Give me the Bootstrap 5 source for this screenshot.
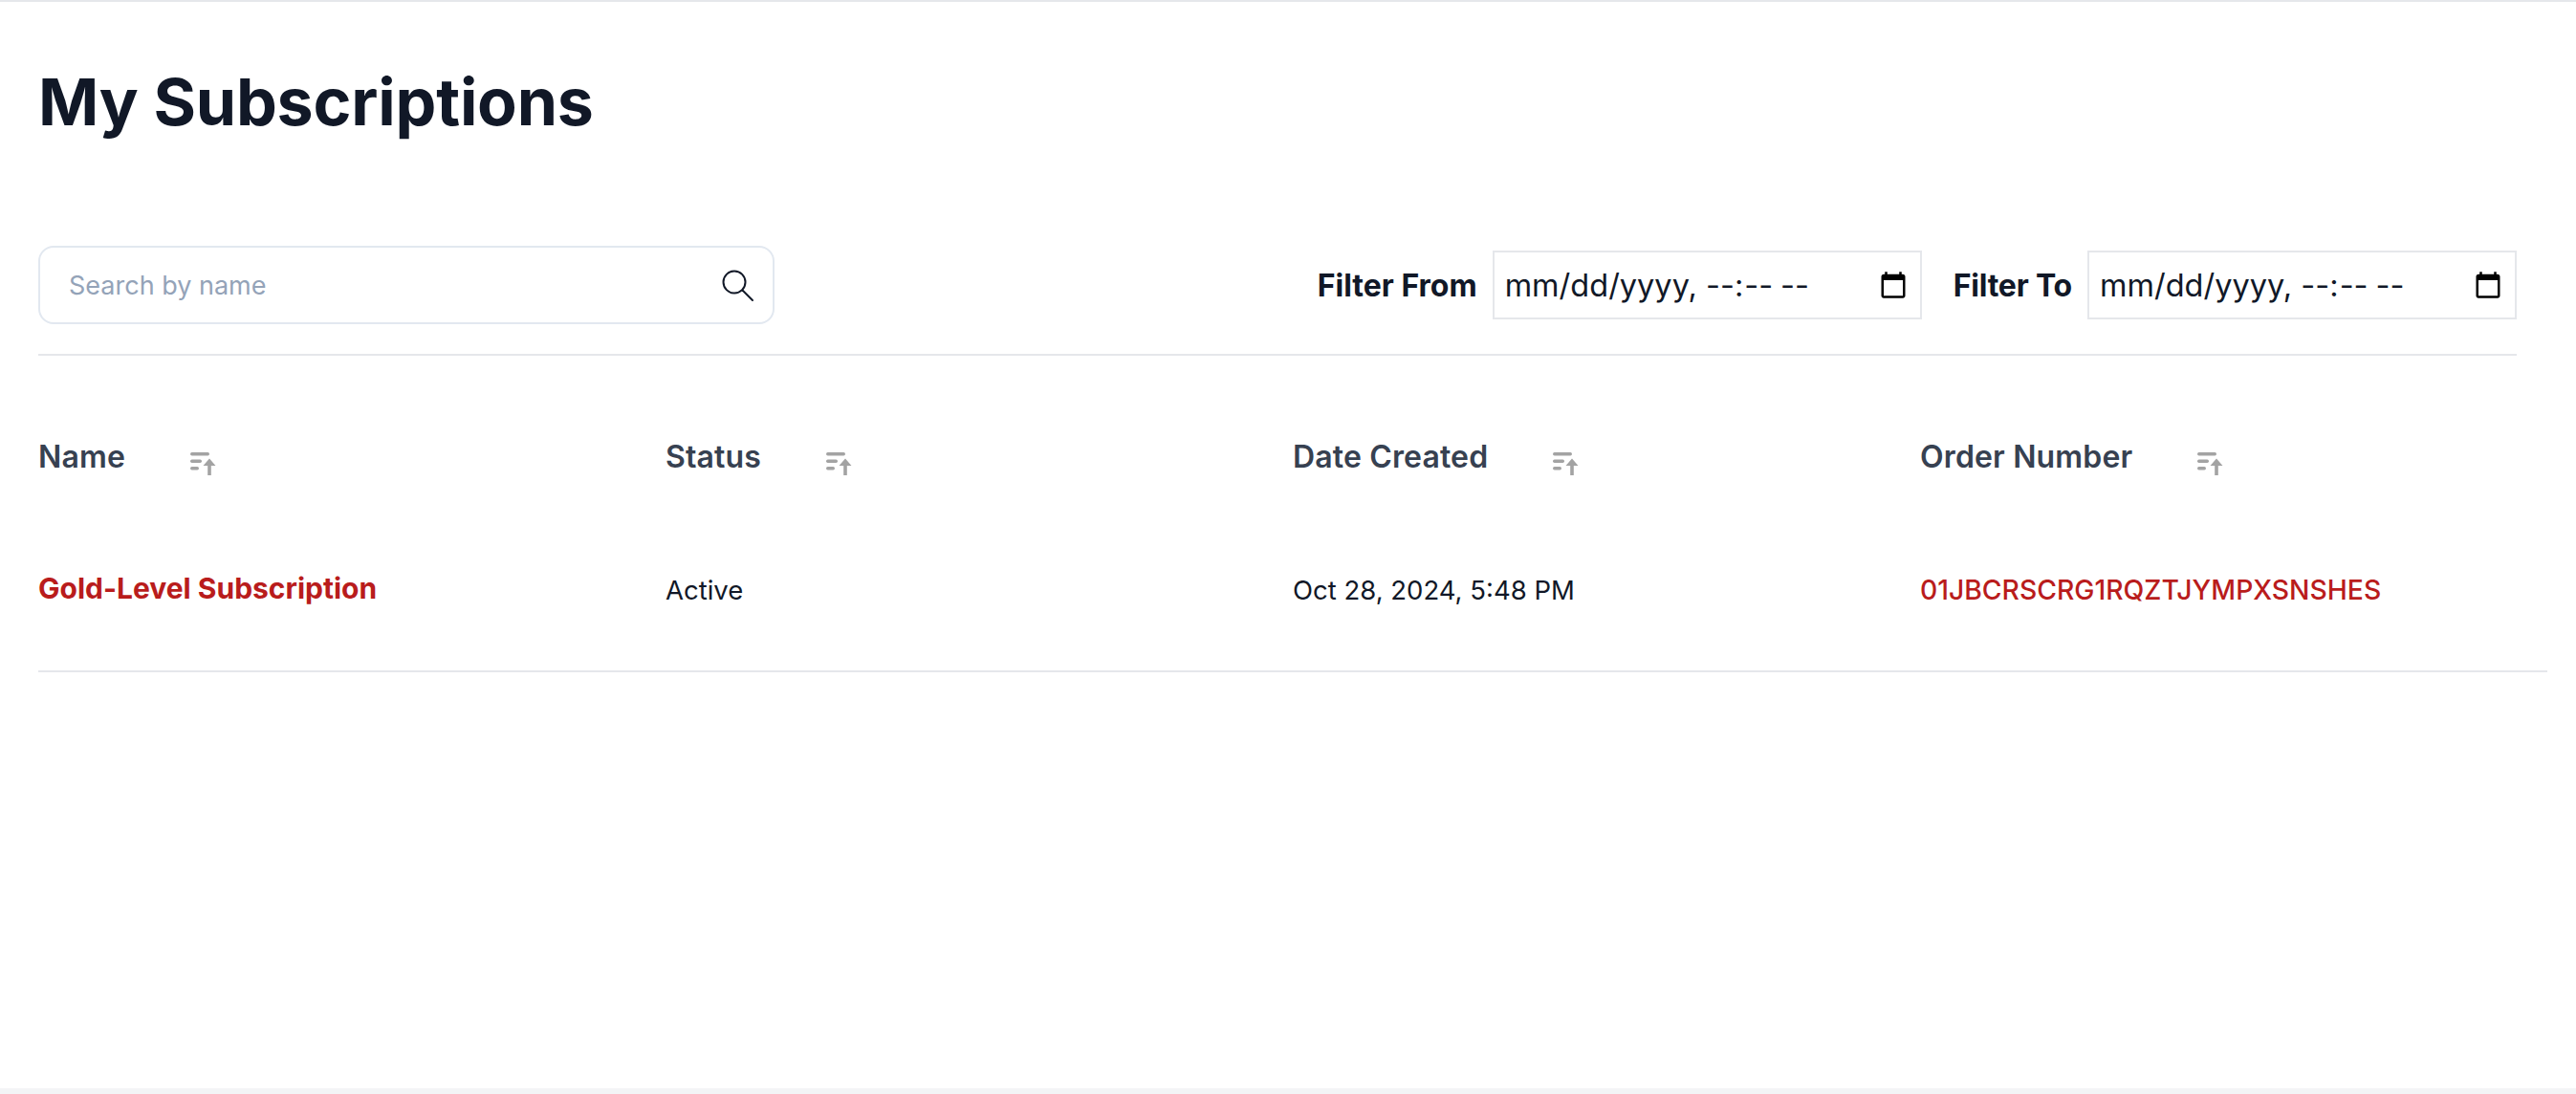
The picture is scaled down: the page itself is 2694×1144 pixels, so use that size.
<!DOCTYPE html>
<html lang="en">
<head>
<meta charset="utf-8">
<title>My Subscriptions</title>
<link href="https://cdn.jsdelivr.net/npm/bootstrap@5.3.0/dist/css/bootstrap.min.css" rel="stylesheet">
<style>
body{font-family:Inter,"Liberation Sans",sans-serif;background:#fff;color:#111827;display:flex;flex-direction:column;height:1144px;overflow:hidden}
.top-rule{height:2px;background:#e5e7eb;flex:none}
.bottom-rule{height:6px;background:#f3f4f6;flex:none;margin-top:auto}
.page-area{padding:0 30px 0 40px}
.page-title{font-size:68px;font-weight:700;line-height:80px;letter-spacing:-.2px;color:#111827;margin:64px 0 111px}
.tool-bar{width:2592px;height:82px;padding-bottom:31px;border-bottom:2px solid #e5e7eb;box-sizing:content-box}
.search-wrap{width:770px;height:82px;border:2px solid #e2e8f0;border-radius:16px;padding:0 19px 0 30px}
.search-wrap input{border:0;outline:0;flex:1;font-size:27px;background:transparent;color:#111827;padding:2px 0 0;min-width:0}
.search-wrap input::placeholder{color:#94a3b8}
.filter-label{font-size:32px;font-weight:700;color:#111827;padding-top:2px}
.label-to{margin-left:33px;letter-spacing:-.2px}
.date-field{width:449px;height:72px;border:2px solid #e5e7eb;border-radius:0;font-size:32.5px;font-family:Inter,sans-serif;color:#111827;padding:2px 12px 0 11px;background:#fff;outline:0}
.date-field::-webkit-calendar-picker-indicator{width:32px;height:32px;padding:0;margin:0}
.sub-table{width:2624px;table-layout:fixed;margin:0}
.sub-table th,.sub-table td{border:0;background:transparent}
.sub-table th{height:160px;padding:86px 0 34px;line-height:40px;font-size:32px;font-weight:600;letter-spacing:.15px;color:#374151;vertical-align:top}
.sub-table td{height:170px;padding:2px 0 0;font-size:27.5px;font-weight:400;color:#111827;border-bottom:2px solid #e5e7eb;vertical-align:middle}
.sub-name{display:inline-block;margin-bottom:4px;font-size:30px;font-weight:700;color:#b91c1c;text-decoration:none}
.sub-order{color:#b91c1c;text-decoration:none;font-weight:500;font-size:28.3px}
.sort-mark{width:28px;height:24px;margin-left:68px;vertical-align:-8px}
</style>
</head>
<body>
<div class="top-rule"></div>
<main class="page-area">
  <h1 class="page-title">My Subscriptions</h1>
  <div class="tool-bar d-flex align-items-center justify-content-between">
    <div class="search-wrap d-flex align-items-center">
      <input type="text" placeholder="Search by name" aria-label="Search by name">
      <svg width="36" height="36" viewBox="0 0 36 36" fill="none" stroke="#111827" stroke-width="2"><circle cx="15" cy="15" r="11.5"/><path d="M23.5 23.5 34 34" stroke-linecap="round"/></svg>
    </div>
    <div class="d-flex align-items-center">
      <label class="filter-label me-3">Filter From</label>
      <input class="date-field" type="datetime-local" aria-label="Filter From">
      <label class="filter-label label-to me-3">Filter To</label>
      <input class="date-field" type="datetime-local" aria-label="Filter To">
    </div>
  </div>
  <table class="table sub-table">
    <thead>
      <tr>
        <th>Name<svg class="sort-mark" viewBox="0 0 28 24" fill="#a3a3a3"><rect x="0" y="0" width="20" height="3.4" rx="1.7"/><rect x="0" y="7.5" width="12" height="3.4" rx="1.7"/><rect x="0" y="15" width="9" height="3.4" rx="1.7"/><path d="M20 6.5l6.5 7.5h-4.7v10h-3.6V14h-4.7z"/></svg></th>
        <th>Status<svg class="sort-mark" viewBox="0 0 28 24" fill="#a3a3a3"><rect x="0" y="0" width="20" height="3.4" rx="1.7"/><rect x="0" y="7.5" width="12" height="3.4" rx="1.7"/><rect x="0" y="15" width="9" height="3.4" rx="1.7"/><path d="M20 6.5l6.5 7.5h-4.7v10h-3.6V14h-4.7z"/></svg></th>
        <th>Date Created<svg class="sort-mark" viewBox="0 0 28 24" fill="#a3a3a3"><rect x="0" y="0" width="20" height="3.4" rx="1.7"/><rect x="0" y="7.5" width="12" height="3.4" rx="1.7"/><rect x="0" y="15" width="9" height="3.4" rx="1.7"/><path d="M20 6.5l6.5 7.5h-4.7v10h-3.6V14h-4.7z"/></svg></th>
        <th>Order Number<svg class="sort-mark" viewBox="0 0 28 24" fill="#a3a3a3"><rect x="0" y="0" width="20" height="3.4" rx="1.7"/><rect x="0" y="7.5" width="12" height="3.4" rx="1.7"/><rect x="0" y="15" width="9" height="3.4" rx="1.7"/><path d="M20 6.5l6.5 7.5h-4.7v10h-3.6V14h-4.7z"/></svg></th>
      </tr>
    </thead>
    <tbody>
      <tr>
        <td><a class="sub-name" href="#">Gold-Level Subscription</a></td>
        <td>Active</td>
        <td>Oct 28, 2024, 5:48 PM</td>
        <td><a class="sub-order" href="#">01JBCRSCRG1RQZTJYMPXSNSHES</a></td>
      </tr>
    </tbody>
  </table>
</main>
<div class="bottom-rule"></div>
<script src="https://cdn.jsdelivr.net/npm/bootstrap@5.3.0/dist/js/bootstrap.bundle.min.js"></script>
</body>
</html>
